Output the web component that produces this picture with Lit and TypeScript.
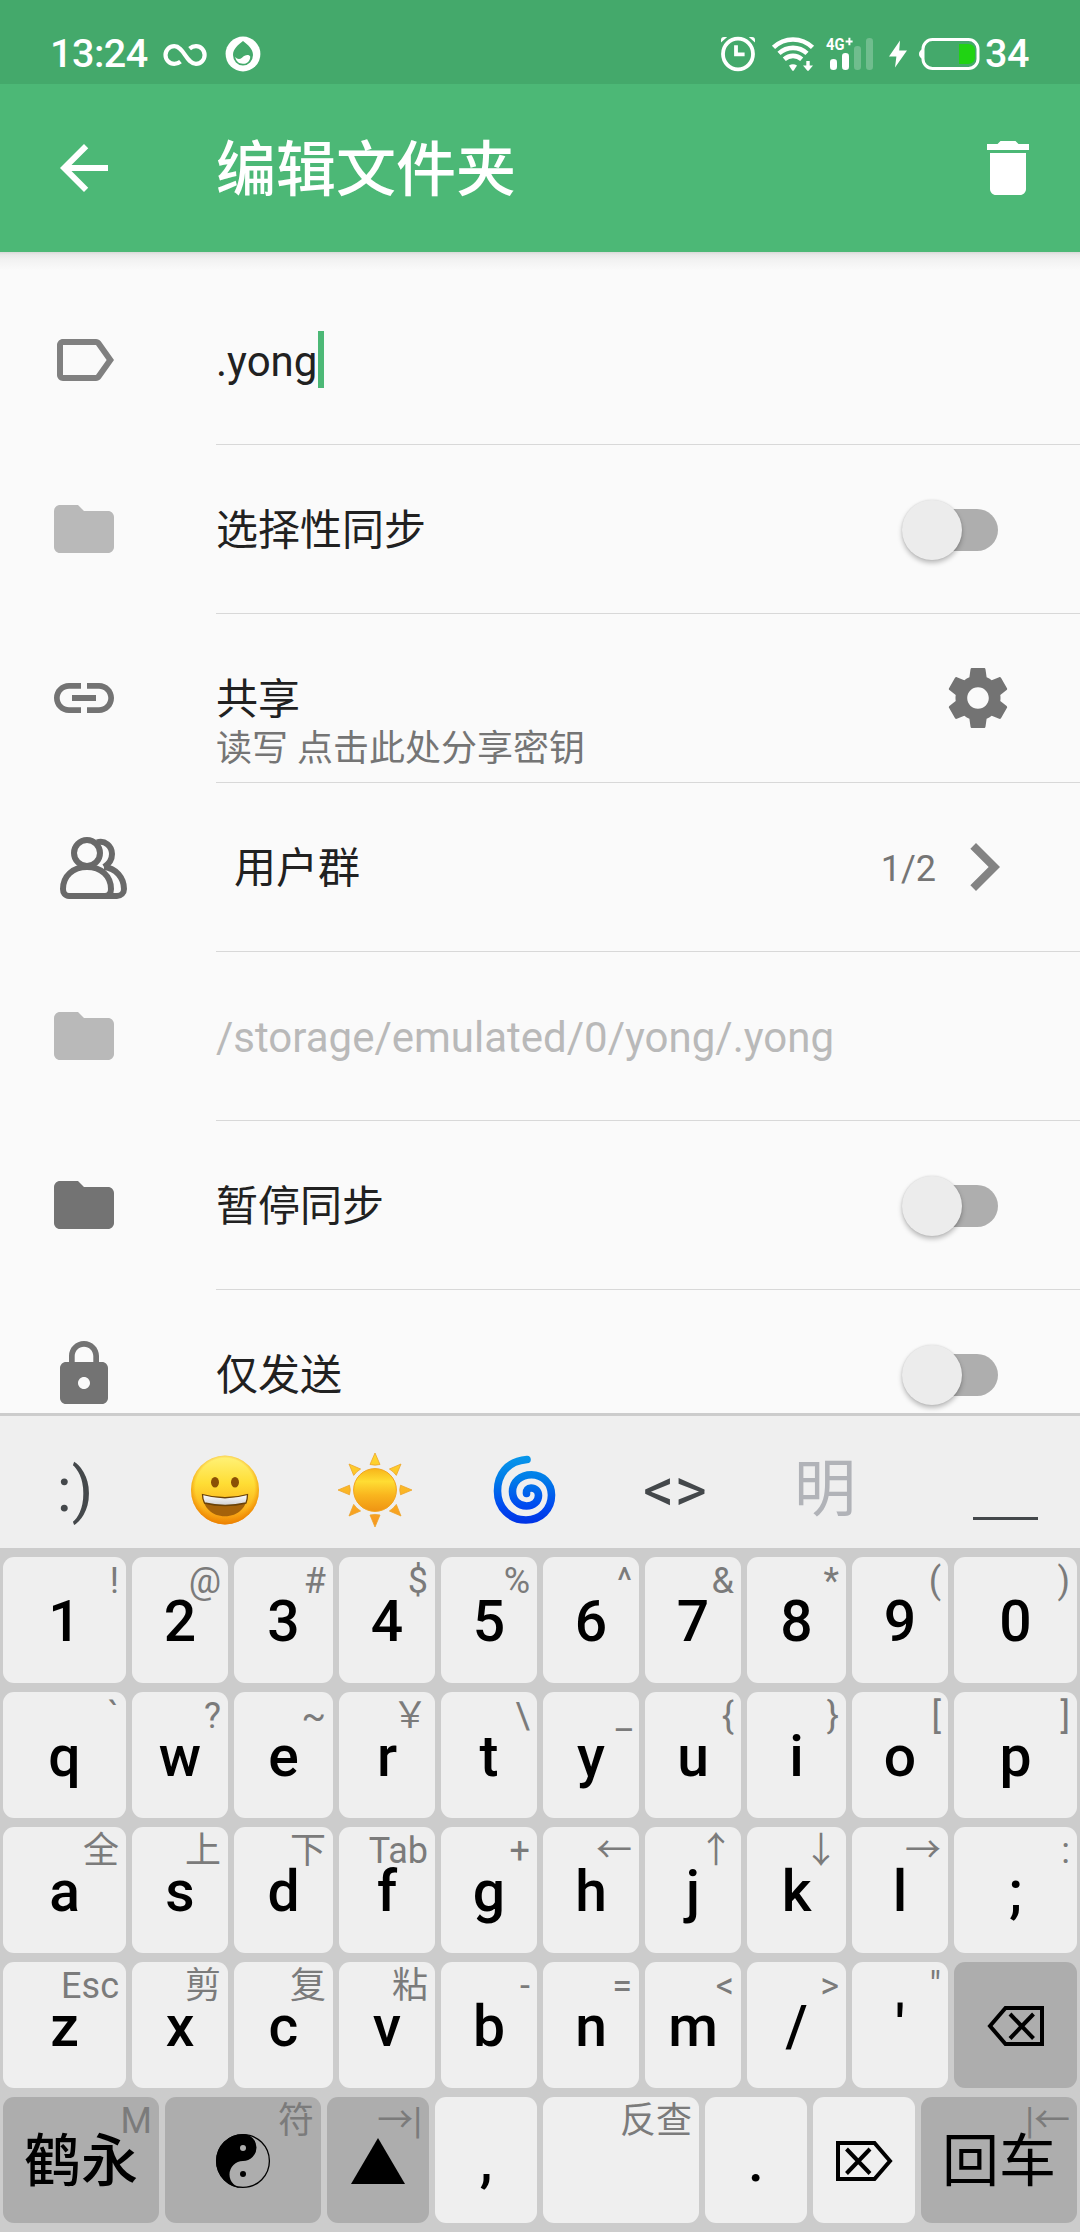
import { LitElement, html, css, nothing, type TemplateResult } from "lit";
import { customElement, property } from "lit/decorators.js";
import { classMap } from "lit/directives/class-map.js";

type KeySpec = { label?: string; hint?: string; icon?: TemplateResult; dark?: boolean; regular?: boolean };

const FONT = css`Roboto, "Noto Sans CJK SC", sans-serif`;

const material = (d: string, color: string, size = 72) => html`
  <svg width=${size} height=${size} viewBox="0 0 24 24"><path fill=${color} d=${d} /></svg>`;

const FOLDER = "M10 4H4c-1.1 0-1.99.9-1.99 2L2 18c0 1.1.9 2 2 2h16c1.1 0 2-.9 2-2V8c0-1.1-.9-2-2-2h-8l-2-2z";
const LABEL = "M17.63 5.84C17.27 5.33 16.67 5 16 5L5 5.01C3.9 5.01 3 5.9 3 7v10c0 1.1.9 1.99 2 1.99L16 19c.67 0 1.27-.33 1.63-.84L22 12l-4.37-6.16zM16 17H5V7h11l3.55 5L16 17z";
const LINK = "M3.9 12c0-1.71 1.39-3.1 3.1-3.1h4V7H7c-2.76 0-5 2.24-5 5s2.24 5 5 5h4v-1.9H7c-1.71 0-3.1-1.39-3.1-3.1zM8 13h8v-2H8v2zm9-6h-4v1.9h4c1.71 0 3.1 1.39 3.1 3.1s-1.39 3.1-3.1 3.1h-4V17h4c2.76 0 5-2.24 5-5s-2.24-5-5-5z";
const LOCK = "M18 8h-1V6c0-2.76-2.24-5-5-5S7 3.24 7 6v2H6c-1.1 0-2 .9-2 2v10c0 1.1.9 2 2 2h12c1.1 0 2-.9 2-2V10c0-1.1-.9-2-2-2zm-6 9c-1.1 0-2-.9-2-2s.9-2 2-2 2 .9 2 2-.9 2-2 2zm3.1-9H8.9V6c0-1.71 1.39-3.1 3.1-3.1 1.71 0 3.1 1.39 3.1 3.1v2z";
const GEAR = "M19.43 12.98c.04-.32.07-.64.07-.98s-.03-.66-.07-.98l2.11-1.65c.19-.15.24-.42.12-.64l-2-3.46c-.12-.22-.39-.3-.61-.22l-2.49 1c-.52-.4-1.08-.73-1.69-.98l-.38-2.65C14.46 2.18 14.25 2 14 2h-4c-.25 0-.46.18-.49.42l-.38 2.65c-.61.25-1.17.59-1.69.98l-2.49-1c-.23-.09-.49 0-.61.22l-2 3.46c-.13.22-.07.49.12.64l2.11 1.65c-.04.32-.07.65-.07.98s.03.66.07.98l-2.11 1.65c-.19.15-.24.42-.12.64l2 3.46c.12.22.39.3.61.22l2.49-1c.52.4 1.08.73 1.69.98l.38 2.65c.03.24.24.42.49.42h4c.25 0 .46-.18.49-.42l.38-2.65c.61-.25 1.17-.59 1.69-.98l2.49 1c.23.09.49 0 .61-.22l2-3.46c.12-.22.07-.49-.12-.64l-2.11-1.65zM12 15.6c-1.98 0-3.6-1.62-3.6-3.6s1.62-3.6 3.6-3.6 3.6 1.62 3.6 3.6-1.62 3.6-3.6 3.6z";
const BACK = "M20 11H7.83l5.59-5.59L12 4l-8 8 8 8 1.41-1.41L7.83 13H20v-2z";
const TRASH = "M6 19c0 1.1.9 2 2 2h8c1.1 0 2-.9 2-2V7H6v12zM19 4h-3.5l-1-1h-5l-1 1H5v2h14V4z";
const CHEVRON = "M10 6L8.59 7.41 13.17 12l-4.58 4.59L10 18l6-6z";

const people = html`
  <svg width="84" height="72" viewBox="48 831 84 72" fill="none" stroke="#696969" stroke-width="6">
    <circle cx="87" cy="853" r="13" />
    <path d="M97 842.4C105 840 112 846 112 854C112 859 109 864 104 867" />
    <path d="M63 889C63 876 73 867 87 867S111 876 111 889C111 893 109 896 105 896H69C65 896 63 893 63 889Z" />
    <path d="M104 867C116 868 124 878 124 889C124 893 121 896 117 896H105" />
  </svg>`;

const infinity = html`
  <svg class="infinity" width="44" height="24" viewBox="0 0 44 24" fill="none" stroke="#fff" stroke-width="4.2">
    <path d="M17.5 18.6C15.8 20 13.6 20.8 11.3 20.8C6.4 20.8 2.5 16.9 2.5 12S6.4 3.2 11.3 3.2C21 3.2 23 20.8 33 20.8C37.8 20.8 41.6 16.9 41.6 12S37.8 3.2 33 3.2C30.6 3.2 28.3 4.1 26.6 5.6" />
  </svg>`;

const drop = html`
  <svg class="drop" width="36" height="36" viewBox="0 0 36 36">
    <circle cx="18" cy="18" r="17.4" fill="#fff" />
    <path fill="#44a96b" d="M18 5C23 9 28 13 28 19A10 10.5 0 0 1 8 19C8 13 13 9 18 5Z" />
    <path fill="#fff" d="M10.3 20.8C12 23.4 14.6 23.8 17 21.7C19.6 19.2 23.2 18 25.2 20.4C25.4 25 22 27.8 17.9 27.8C13.8 27.8 10.6 25 10.3 20.8Z" />
  </svg>`;

const alarm = html`
  <svg width="36" height="36" viewBox="0 0 36 36" fill="none" stroke="#fff">
    <ellipse cx="18" cy="18" rx="15" ry="15.3" stroke-width="3.8" />
    <path d="M16 9.3V18.4H24.6" stroke-width="3.8" />
    <path fill="#fff" stroke="none" d="M1 6.6V4A3 3 0 0 1 4 1H7.2ZM35 6.6V4A3 3 0 0 0 32 1H28.8Z" />
  </svg>`;

const wifi = html`
  <svg class="wifi" width="44" height="36" viewBox="0 0 44 36" fill="none" stroke="#fff" stroke-width="4.6">
    <path d="M2.5 11.4C13.5 .8 30.5 .8 41.5 11.4" />
    <path d="M8 17.4C16 10 28 10 36 17.4" />
    <path d="M13.3 23.2C18.3 18.8 25.7 18.8 30.7 23.2" />
    <path fill="#fff" stroke="none" d="M18 29.6Q22 26.8 26 29.6L22.8 34.4Q22 35.3 21.2 34.4Z" />
    <path fill="#fff" stroke="none" d="M35.3 25H38.7V29.6H42L37.8 34.6Q37 35.4 36.2 34.6L32 29.6H35.3Z" />
  </svg>`;

const signal = html`
  <svg class="signal" width="48" height="34" viewBox="0 0 48 34" fill="#fff">
    <text x="0" y="13" font-family="Roboto, sans-serif" font-weight="700" font-size="16.5" textLength="18.5" lengthAdjust="spacingAndGlyphs">4G</text>
    <path d="M19.6 3.6H22.4V.8H24.4V3.6H26.6V5.6H24.4V8.2H22.4V5.6H19.6Z" />
    <rect x="4" y="22" width="7" height="11" rx="3.3" />
    <rect x="16" y="16" width="7" height="17" rx="3.3" />
    <rect x="28" y="9" width="7" height="24" rx="3.3" opacity=".24" />
    <rect x="40" y="1" width="7" height="32" rx="3.3" opacity=".24" />
  </svg>`;

const bolt = html`
  <svg class="bolt" width="20" height="28" viewBox="0 0 20 28"><path fill="#fff" d="M12 .6L1 16.4H8.4L7 27.4L19 10.6H11.2Z" /></svg>`;

const battery = html`
  <svg class="battery" width="62" height="34" viewBox="0 0 62 34">
    <path d="M4.4 12Q1 14 1 17T4.4 22Z" fill="#fff" />
    <rect x="5" y="2.6" width="55" height="28.8" rx="9.5" fill="none" stroke="#fff" stroke-width="3" />
    <path fill="#20d313" d="M41 7H50Q57 7 57 14V20Q57 27 50 27H41Z" />
  </svg>`;

const grin = html`
  <svg class="emoji" width="70" height="72" viewBox="0 0 70 72">
    <defs>
      <linearGradient id="face" x1="0" y1="0" x2="0" y2="1"><stop offset="0" stop-color="#fff27a" /><stop offset=".4" stop-color="#ffde35" /><stop offset=".75" stop-color="#fcb41c" /><stop offset="1" stop-color="#f08c08" /></linearGradient>
      <radialGradient id="rim" cx=".5" cy=".47" r=".54"><stop offset=".8" stop-color="#f08a00" stop-opacity="0" /><stop offset="1" stop-color="#ea7c00" stop-opacity=".85" /></radialGradient>
      <linearGradient id="teeth" x1="0" y1="0" x2="0" y2="1"><stop offset="0" stop-color="#fff" /><stop offset="1" stop-color="#cfcfd2" /></linearGradient>
    </defs>
    <ellipse cx="35" cy="36" rx="34" ry="34.4" fill="url(#face)" />
    <ellipse cx="35" cy="36" rx="34" ry="34.4" fill="url(#rim)" />
    <ellipse cx="25" cy="28.3" rx="4" ry="5.2" fill="#8a4f05" />
    <ellipse cx="45" cy="28.3" rx="4" ry="5.2" fill="#8a4f05" />
    <path fill="#a4620a" d="M12.5 40.5Q35 46.5 57.5 40.5C57.5 53 48 62.3 35 62.3S12.5 53 12.5 40.5Z" />
    <path fill="url(#teeth)" stroke="#6b4206" stroke-width="1.3" d="M12.5 40.5Q35 47 57.5 40.5Q57.5 45 56 49Q35 54 14.5 49Q12.5 45 12.5 40.5Z" />
  </svg>`;

const sun = html`
  <svg class="emoji" width="76" height="76" viewBox="-38 -38 76 76">
    <defs>
      <linearGradient id="disc" x1="0" y1="0" x2="0" y2="1"><stop offset="0" stop-color="#f7b51a" /><stop offset=".3" stop-color="#ffdd33" /><stop offset=".62" stop-color="#f9b51e" /><stop offset="1" stop-color="#ef9413" /></linearGradient>
      <linearGradient id="rays" gradientUnits="userSpaceOnUse" x1="0" y1="-37" x2="0" y2="37"><stop offset="0" stop-color="#ffd92e" /><stop offset="1" stop-color="#f6951f" /></linearGradient>
    </defs>
    <path fill="url(#rays)" stroke="#eda52a" stroke-width=".8" d="M0 -37L5 -25.5Q0 -24.2 -5 -25.5ZM0 37L5 25Q0 23.8 -5 25ZM-37 0L-25.5 -4.8Q-24 0 -25.5 4.8ZM37 0L25.5 -4.8Q24 0 25.5 4.8ZM-26 -26L-14.4 -21Q-18.5 -18.5 -21.3 -14.6ZM26 -26L14.4 -21Q18.5 -18.5 21.3 -14.6ZM-26 26L-14.4 21Q-18.5 18.5 -21.3 14.4ZM26 26L14.4 21Q18.5 18.5 21.3 14.4Z" />
    <circle r="21.4" fill="url(#disc)" stroke="#f3a41c" />
  </svg>`;

const cyclone = html`
  <svg class="emoji" width="66" height="72" viewBox="492 1454 66 72" fill="none">
    <defs><linearGradient id="swirl" gradientUnits="userSpaceOnUse" x1="0" y1="1456" x2="0" y2="1524"><stop offset="0" stop-color="#0897ea" /><stop offset=".35" stop-color="#007be8" /><stop offset=".75" stop-color="#0048f0" /><stop offset="1" stop-color="#0032e4" /></linearGradient></defs>
    <path stroke="url(#swirl)" stroke-width="7.6" stroke-linecap="round" d="M527 1459.5C507 1461 497.5 1475 497.5 1491C497.5 1508 510 1520 526 1520C541 1520 551.5 1509 551.5 1495C551.5 1483 542.5 1474.7 531.5 1474.7C520.5 1474.7 512.5 1482 512.5 1491.5C512.5 1500 518.5 1506 526.5 1506C533.5 1506 538.5 1501.5 538.5 1495.5C538.5 1491 535 1488 531 1488C528 1488 526.2 1490 526.5 1493.5" />
  </svg>`;

const erase = (flip: boolean) => html`
  <svg width="58" height="42" viewBox="0 0 58 42" fill="none" stroke="#000" stroke-width="4">
    <g transform=${flip ? "translate(58 0) scale(-1 1)" : ""}>
      <path d="M3 21L18.5 3H55V39H18.5Z" />
      <path d="M23 9L46.5 33.5M46.5 9L23 33.5" />
    </g>
  </svg>`;

const yinyang = html`
  <svg width="56" height="56" viewBox="-28 -28 56 56">
    <circle r="26.4" fill="none" stroke="#000" stroke-width="1.3" />
    <path d="M0 -27A27 27 0 0 0 0 27A13.5 13.5 0 0 1 0 0A13.5 13.5 0 0 0 0 -27Z" />
    <circle cy="-13" r="3" fill="#adadad" /><circle cy="13" r="3" />
  </svg>`;

const shift = html`<svg width="54" height="46" viewBox="0 0 54 46"><path d="M27 0L54 46H0Z" /></svg>`;

const row = (labels: string, hints: string[]): KeySpec[] =>
  [...labels].map((label, i) => ({ label, hint: hints[i] }));

const KEY_ROWS: KeySpec[][] = [
  row("1234567890", ["!", "@", "#", "$", "%", "^", "&", "*", "(", ")"]),
  row("qwertyuiop", ["`", "?", "~", "￥", "\\", "_", "{", "}", "[", "]"]),
  row("asdfghjkl;", ["全", "上", "下", "Tab", "+", "←", "↑", "↓", "→", ":"]),
  [...row("zxcvbnm/'", ["Esc", "剪", "复", "粘", "-", "=", "<", ">", '"']), { icon: erase(false), dark: true }],
];

const BOTTOM_ROW: KeySpec[] = [
  { label: "鹤永", hint: "M", dark: true },
  { icon: yinyang, hint: "符", dark: true },
  { icon: shift, hint: "→|", dark: true },
  { label: "," },
  { hint: "反查" },
  { label: "." },
  { icon: erase(true) },
  { label: "回车", hint: "|←", dark: true, regular: true },
];

@customElement("status-bar")
class StatusBar extends LitElement {
  static styles = css`
    :host { display: flex; align-items: flex-start; height: 84px; box-sizing: border-box; background: #44a96b; color: #fff; padding: 36px 50px 0 50px; font: 500 39.5px/36px ${FONT}; }
    svg { display: block; flex: none; }
    .text { padding-top: 0; height: 36px; line-height: 36px; }
    .time { width: 113px; letter-spacing: -.5px; }
    .infinity { margin-top: 7px; }
    .drop { margin-left: 18px; }
    .right { display: flex; margin-left: auto; }
    .wifi { margin-left: 15px; }
    .signal { margin: 1px 0 0 11px; overflow: visible; }
    .bolt { margin: 4px 0 0 14px; }
    .battery { margin: 1px 0 0 10px; }
    .level { margin-left: 5px; width: 45px; letter-spacing: -.5px; }
  `;
  render() {
    return html`
      <div class="text time">13:24</div>${infinity}${drop}
      <div class="right">${alarm}${wifi}${signal}${bolt}${battery}<div class="text level">34</div></div>`;
  }
}

@customElement("toggle-switch")
class ToggleSwitch extends LitElement {
  static styles = css`
    :host { display: flex; align-items: center; width: 84px; height: 42px; margin: 1px 82px 0 0; border-radius: 21px; background: #aeaeae; }
    .thumb { width: 60px; height: 60px; flex: none; margin-left: -12px; border-radius: 50%; background: #ececec; box-shadow: 0 3px 5px rgba(0, 0, 0, .25), 0 0 2px rgba(0, 0, 0, .12); }
  `;
  render() {
    return html`<div class="thumb"></div>`;
  }
}

@customElement("setting-row")
class SettingRow extends LitElement {
  @property({ attribute: false }) icon: TemplateResult | typeof nothing = nothing;
  static styles = css`
    :host { display: flex; height: 169px; flex: none; }
    .icon { width: 168px; padding-left: 48px; height: 168px; display: flex; align-items: center; flex: none; }
    .icon svg { display: block; }
    .body { flex: 1; box-sizing: border-box; height: 169px; border-bottom: 1px solid #d8d8d8; display: flex; align-items: center; }
    .main { flex: 1; }
  `;
  render() {
    return html`
      <div class="icon">${this.icon}</div>
      <div class="body"><div class="main"><slot></slot></div><slot name="end"></slot></div>`;
  }
}

@customElement("soft-keyboard")
class SoftKeyboard extends LitElement {
  static styles = css`
    :host { display: flex; flex-direction: column; height: 819px; box-sizing: border-box; flex: none; background: #ccc; border-top: 3px solid #ccc; font-family: ${FONT}; color: #000; }
    svg { display: block; }
    .tools { display: grid; grid-template-columns: 150px 150px 150px 150px 150px 150px 180px; height: 132px; background: #efefef; color: #44484b; font-size: 62px; line-height: 72px; }
    .tool { display: flex; align-items: center; justify-content: center; padding-top: 16px; }
    .muted { color: #b1b3b8; padding-top: 15px; }
    .line { align-items: flex-end; padding: 0 0 28px 30px; }
    .line i { width: 65px; height: 3px; background: #44484b; }
    .keys { display: flex; flex-direction: column; gap: 9px; padding: 9px 3px; }
    .row { display: grid; gap: 6px; height: 126px; grid-template-columns: 123px 96px 99px 96px 96px 96px 96px 99px 96px 123px; }
    .bottom { grid-template-columns: 156px 156px 102px 102px 156px 102px 102px 156px; }
    .key { position: relative; display: flex; align-items: center; justify-content: center; border-radius: 11px; background: #efefef; font-weight: 500; font-size: 57px; line-height: 66px; white-space: nowrap; }
    .dark { background: #adadad; }
    .label { padding-top: 4px; }
    .icon { padding-top: 1px; }
    .regular { font-weight: 400; }
    .hint { position: absolute; top: 3px; right: 7px; font-weight: 400; font-size: 36px; line-height: 42px; color: #7b7b7b; }
  `;
  private key(k: KeySpec) {
    return html`
      <div class=${classMap({ key: true, dark: !!k.dark, regular: !!k.regular })}>
        ${k.hint ? html`<span class="hint">${k.hint}</span>` : nothing}
        ${k.icon ? html`<span class="icon">${k.icon}</span>` : k.label ? html`<span class="label">${k.label}</span>` : nothing}
      </div>`;
  }
  render() {
    return html`
      <div class="tools">
        <div class="tool">:)</div>
        <div class="tool">${grin}</div>
        <div class="tool">${sun}</div>
        <div class="tool">${cyclone}</div>
        <div class="tool">&lt;&gt;</div>
        <div class="tool muted">明</div>
        <div class="tool line"><i></i></div>
      </div>
      <div class="keys">
        ${KEY_ROWS.map((r) => html`<div class="row">${r.map((k) => this.key(k))}</div>`)}
        <div class="row bottom">${BOTTOM_ROW.map((k) => this.key(k))}</div>
      </div>`;
  }
}

@customElement("app-root")
class AppRoot extends LitElement {
  static styles = css`
    :host { display: flex; flex-direction: column; width: 1080px; height: 2232px; overflow: hidden; background: #fafafa; font-family: ${FONT}; color: #212121; }
    svg { display: block; }
    .bar { display: flex; align-items: center; flex: none; height: 168px; box-sizing: border-box; padding: 0 36px 0 48px; background: #4cb876; color: #fff; }
    .title { flex: 1; padding: 5px 0 0 96px; font-size: 60px; line-height: 72px; font-weight: 500; }
    .list { flex: 1; min-height: 0; overflow: hidden; display: flex; flex-direction: column; }
    .shade { height: 24px; flex: none; background: linear-gradient(#d9d9d9 0, #e9e9e9 3px, #f2f2f2 8px, #fafafa 18px); }
    .text { padding-top: 3px; font-size: 42px; line-height: 56px; white-space: nowrap; }
    .edit { display: flex; align-items: center; }
    .caret { width: 6px; height: 57px; margin: 0 0 2px 1px; background: #4cb876; }
    .two { padding-top: 42px; }
    .sub { font-size: 36px; line-height: 42px; color: #757575; white-space: nowrap; }
    .indent { padding-left: 18px; }
    .path { color: #b9b9b9; }
    .gear { margin-right: 66px; }
    .more { display: flex; align-items: center; margin-right: 48px; }
    .count { font-size: 36px; line-height: 42px; color: #757575; padding-top: 4px; }
  `;
  render() {
    const grey = "#737373";
    return html`
      <status-bar></status-bar>
      <div class="bar">${material(BACK, "#fff")}<div class="title">编辑文件夹</div>${material(TRASH, "#fff")}</div>
      <div class="list">
        <div class="shade"></div>
        <setting-row .icon=${material(LABEL, "#808080")}>
          <div class="edit"><div class="text">.yong</div><div class="caret"></div></div>
        </setting-row>
        <setting-row .icon=${material(FOLDER, "#b9b9b9")}>
          <div class="text">选择性同步</div><toggle-switch slot="end"></toggle-switch>
        </setting-row>
        <setting-row .icon=${material(LINK, grey)}>
          <div class="two"><div class="text">共享</div><div class="sub">读写 点击此处分享密钥</div></div>
          <div class="gear" slot="end">${material(GEAR, grey)}</div>
        </setting-row>
        <setting-row .icon=${people}>
          <div class="text indent">用户群</div>
          <div class="more" slot="end"><div class="count">1/2</div>${material(CHEVRON, "#838383", 96)}</div>
        </setting-row>
        <setting-row .icon=${material(FOLDER, "#b9b9b9")}>
          <div class="text path">/storage/emulated/0/yong/.yong</div>
        </setting-row>
        <setting-row .icon=${material(FOLDER, grey)}>
          <div class="text">暂停同步</div><toggle-switch slot="end"></toggle-switch>
        </setting-row>
        <setting-row .icon=${material(LOCK, grey)}>
          <div class="text">仅发送</div><toggle-switch slot="end"></toggle-switch>
        </setting-row>
      </div>
      <soft-keyboard></soft-keyboard>`;
  }
}
